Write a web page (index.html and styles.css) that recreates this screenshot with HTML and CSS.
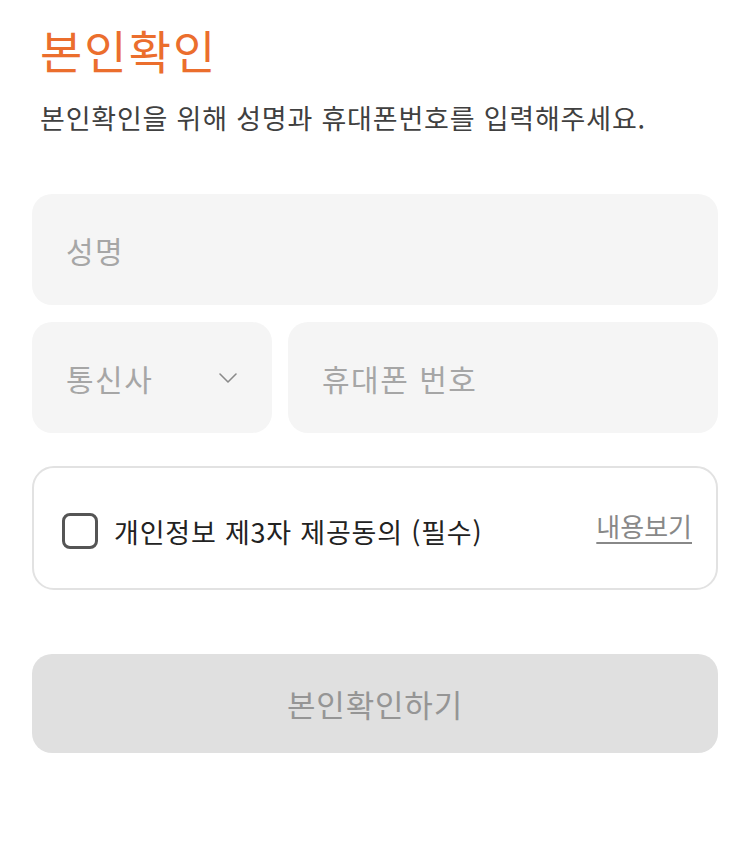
FILE: index.html
```html
<!DOCTYPE html>
<html lang="ko">
<head>
<meta charset="utf-8">
<title>본인확인</title>
<link rel="stylesheet" href="styles.css">
</head>
<body>
<main class="page">
  <h1 class="title">본인확인</h1>
  <p class="desc">본인확인을 위해 성명과 휴대폰번호를 입력해주세요.</p>

  <div class="field field-name">
    <input class="input" type="text" placeholder="성명">
  </div>

  <div class="row">
    <div class="field field-carrier">
      <span class="placeholder">통신사</span>
      <svg class="chevron" width="20" height="12" viewBox="0 0 20 12" aria-hidden="true">
        <path d="M2 2 L10 10 L18 2" fill="none" stroke="#8a8a8a" stroke-width="1.6" stroke-linecap="round" stroke-linejoin="round"/>
      </svg>
    </div>
    <div class="field field-phone">
      <input class="input" type="tel" placeholder="휴대폰 번호">
    </div>
  </div>

  <div class="agree">
    <label class="agree-label">
      <span class="checkbox"></span>
      <span class="agree-text">개인정보 제3자 제공동의 (필수)</span>
    </label>
    <a class="agree-link" href="#">내용보기</a>
  </div>

  <button class="submit" type="button" disabled>본인확인하기</button>
</main>
</body>
</html>
```

FILE: styles.css
```css
* {
  box-sizing: border-box;
}

html, body {
  margin: 0;
  padding: 0;
  background: #ffffff;
}

body {
  font-family: "Noto Sans CJK KR", "Noto Sans", sans-serif;
  color: #222222;
}

.page {
  padding: 18px 32px 0;
  display: flex;
  flex-direction: column;
}

.title {
  margin: 0 0 0 8px;
  font-size: 46px;
  line-height: 62px;
  font-weight: 400;
  color: #eb6e2d;
  letter-spacing: 2px;
}

.desc {
  margin: 20px 0 0 8px;
  font-size: 27px;
  line-height: 36px;
  color: #404040;
  letter-spacing: 0.8px;
}

.field {
  background: #f5f5f5;
  border-radius: 20px;
  height: 111px;
  display: flex;
  align-items: center;
}

.field-name {
  margin-top: 58px;
}

.input {
  width: 100%;
  height: 100%;
  border: none;
  background: transparent;
  outline: none;
  padding: 0 34px;
  font-family: inherit;
  font-size: 30px;
  letter-spacing: 1.5px;
  color: #222;
}

.input::placeholder {
  color: #a6a6a6;
}

.row {
  margin-top: 17px;
  display: flex;
  gap: 16px;
}

.field-carrier {
  width: 240px;
  flex: none;
  padding: 0 34px;
  justify-content: space-between;
}

.placeholder {
  font-size: 30px;
  letter-spacing: 1.5px;
  color: #a6a6a6;
}

.field-phone {
  flex: 1;
}

.agree {
  margin-top: 33px;
  height: 124px;
  border: 2px solid #e2e2e2;
  border-radius: 22px;
  display: flex;
  align-items: center;
  justify-content: space-between;
  padding: 0 24px 0 28px;
}

.agree-label {
  display: flex;
  align-items: center;
  gap: 16px;
  margin-top: 6px;
}

.checkbox {
  width: 36px;
  height: 36px;
  border: 3px solid #555555;
  border-radius: 8px;
  flex: none;
}

.agree-text {
  font-size: 27px;
  letter-spacing: 0.8px;
  color: #222222;
}

.agree-link {
  font-size: 26px;
  color: #888888;
  text-decoration: underline;
  text-underline-offset: 5px;
  text-decoration-thickness: 1.5px;
  margin-bottom: 6px;
}

.submit {
  margin-top: 64px;
  height: 99px;
  border: none;
  border-radius: 20px;
  background: #e0e0e0;
  color: #959595;
  font-family: inherit;
  font-size: 31px;
  letter-spacing: 0.8px;
}
```
